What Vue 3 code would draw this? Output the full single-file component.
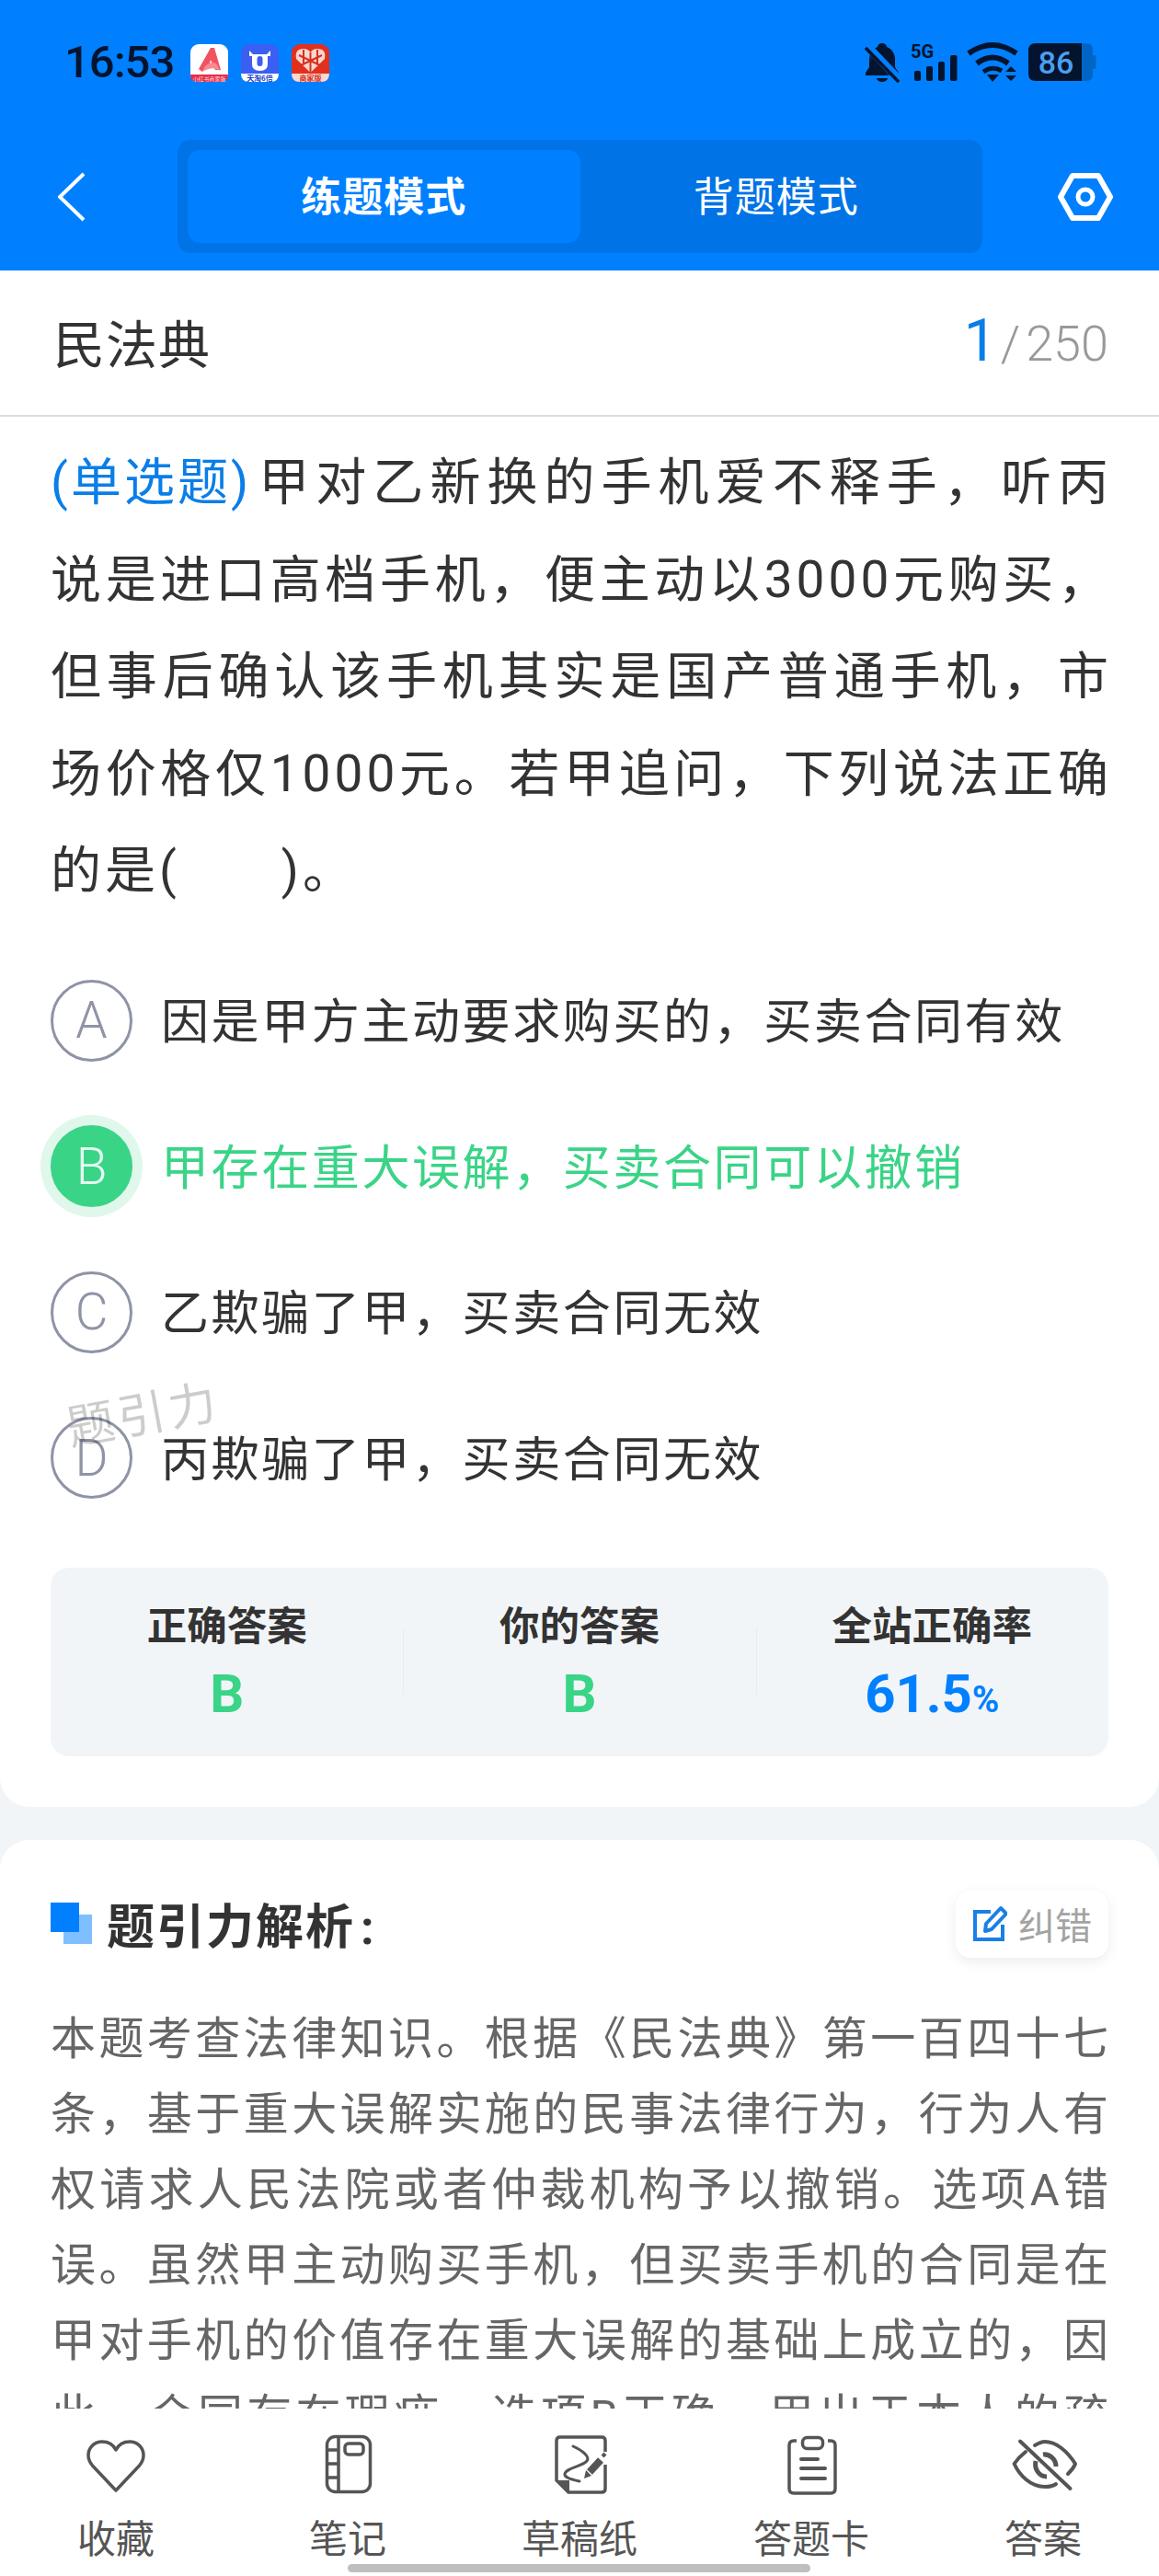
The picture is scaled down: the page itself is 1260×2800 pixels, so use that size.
<script setup>
const questionLines = [
  '甲对乙新换的手机爱不释手，听丙',
  '说是进口高档手机，便主动以3000元购买，',
  '但事后确认该手机其实是国产普通手机，市',
  '场价格仅1000元。若甲追问，下列说法正确',
]
const options = [
  { key: 'A', text: '因是甲方主动要求购买的，买卖合同有效' },
  { key: 'B', text: '甲存在重大误解，买卖合同可以撤销', correct: true },
  { key: 'C', text: '乙欺骗了甲，买卖合同无效' },
  { key: 'D', text: '丙欺骗了甲，买卖合同无效' },
]
const analysis = [
  '本题考查法律知识。根据《民法典》第一百四十七',
  '条，基于重大误解实施的民事法律行为，行为人有',
  '权请求人民法院或者仲裁机构予以撤销。选项A错',
  '误。虽然甲主动购买手机，但买卖手机的合同是在',
  '甲对手机的价值存在重大误解的基础上成立的，因',
  '此，合同存在瑕疵。选项B正确。甲出于本人的疏',
]
</script>

<template>
  <div class="page" lang="zh-CN">
    <header class="header">
      <div class="status">
        <span class="time">16:53</span>
        <div class="apps">
          <svg class="app" viewBox="0 0 41 41">
            <rect width="41" height="41" rx="9" fill="#fff" />
            <path d="M9 27 L22 4 L26 4 L33 28 L27 28 L22 17 L20 24 Q15 26 13 30 Z" fill="#f0535f" />
            <path d="M16 24 Q24 17 29 22 L32 29 Q25 23 13 30 Z" fill="#f78b92" />
            <path d="M0 33 H41 Q41 41 32 41 H9 Q0 41 0 33 Z" fill="#ea2b46" />
            <text x="20.5" y="39.5" class="tiny six" fill="#ffd9de">小红书商家版</text>
          </svg>
          <svg class="app" viewBox="0 0 41 41">
            <rect width="41" height="41" rx="9" fill="#3a5ff2" />
            <path d="M0 32 H41 Q41 41 32 41 H9 Q0 41 0 32 Z" fill="#fff" />
            <path d="M9 7 L13 11 H28 L32 7 L32 13 H29 V22 Q29 29 20.5 29 Q12 29 12 22 V13 H9 Z" fill="#fff" />
            <rect x="17.5" y="13" width="6" height="11" rx="3" fill="#3a5ff2" />
            <text x="20.5" y="39.5" class="tiny" fill="#1c3fc4">天淘6倍</text>
          </svg>
          <svg class="app" viewBox="0 0 41 41">
            <rect width="41" height="41" rx="9" fill="#e1301e" />
            <path d="M20.5 31 L5 16 Q3 5 13 5 Q18 5 20.5 9 Q23 5 28 5 Q38 5 36 16 Z" fill="#f8d7cf" />
            <path d="M20.5 9 V31 M8 12 L33 24 M33 12 L8 24 M13 6 L13 22 M28 6 L28 22" stroke="#d9301e" stroke-width="2" />
            <path d="M0 32 H41 Q41 41 32 41 H9 Q0 41 0 32 Z" fill="#fbd9d1" />
            <text x="20.5" y="39.5" class="tiny" fill="#d0301e">商家版</text>
          </svg>
        </div>
        <svg class="sys" viewBox="0 0 270 56">
          <path d="M28 7 c-3 0 -5 2 -5 4 c-6 2 -9 8 -9 14 v8 l-4 6 v3 h36 v-3 l-4 -6 v-8 c0 -6 -3 -12 -9 -14 c0 -2 -2 -4 -5 -4 z M22 45 a6 4 0 0 0 12 0 z" fill="#04142e" />
          <line x1="10" y1="8" x2="46" y2="46" stroke="#0080ff" stroke-width="9" />
          <line x1="10" y1="12" x2="46" y2="49" stroke="#04142e" stroke-width="3.5" />
          <text x="59" y="23" class="fiveg" fill="#04142e">5G</text>
          <g fill="#04142e">
            <rect x="63" y="37" width="7" height="11" rx="2" />
            <rect x="76" y="32" width="7" height="16" rx="2" />
            <rect x="89" y="27" width="7" height="21" rx="2" />
            <rect x="102" y="20" width="7.5" height="28" rx="2" />
            <path d="M142 41 L155 41 L148 49 Z" />
            <path d="M162 38 L168 32 L174 38 Z M162 42 L174 42 L168 48 Z" />
          </g>
          <g fill="none" stroke="#04142e" stroke-width="6">
            <path d="M122 18 Q148 0 174 18" />
            <path d="M131 29 Q148 16 165 29" />
            <path d="M138 38 Q148 31 158 37" stroke-width="5" />
          </g>
          <path d="M245 7 H250 Q257 7 257 14 V41 Q257 48 250 48 H245 Z" fill="#0065c5" />
          <rect x="257" y="20" width="3.5" height="15" rx="1.5" fill="#0065c5" />
          <path d="M195 7 H245 V48 H195 Q187 48 187 40 V15 Q187 7 195 7 Z" fill="#04142e" />
          <text x="217" y="40" class="batt" fill="#4c9ef0">86</text>
        </svg>
      </div>
      <nav class="nav">
        <svg class="back" viewBox="0 0 30 54">
          <polyline points="28,2 2,27 28,52" fill="none" stroke="#fff" stroke-width="4" />
        </svg>
        <div class="seg">
          <div class="seg-item active"><span>练题模式</span></div>
          <div class="seg-item"><span>背题模式</span></div>
        </div>
        <svg class="hex" viewBox="0 0 60 54">
          <path d="M16 4 H44 L57 27 L44 50 H16 L3 27 Z" fill="none" stroke="#fff" stroke-width="6" stroke-linejoin="round" />
          <circle cx="30" cy="27" r="8" fill="none" stroke="#fff" stroke-width="5" />
        </svg>
      </nav>
    </header>

    <main class="main">
      <section class="card first">
        <div class="title-row">
          <span class="title">民法典</span>
          <span class="count"><b>1</b><i>/</i>250</span>
        </div>
        <div class="question">
          <div class="q-line"><span class="q-type">(单选题)</span>{{ questionLines[0] }}</div>
          <div v-for="line in questionLines.slice(1)" :key="line" class="q-line">{{ line }}</div>
          <div class="q-line last">的是(<span class="blank"></span>)。</div>
        </div>
        <div class="options">
          <div v-for="o in options" :key="o.key" class="option" :class="{ correct: o.correct }">
            <span class="badge">{{ o.key }}</span>
            <span class="opt-text">{{ o.text }}</span>
          </div>
        </div>
        <div class="stats">
          <div class="stat">
            <div class="stat-label">正确答案</div>
            <div class="stat-value green">B</div>
          </div>
          <div class="stat">
            <div class="stat-label">你的答案</div>
            <div class="stat-value green">B</div>
          </div>
          <div class="stat">
            <div class="stat-label">全站正确率</div>
            <div class="stat-value blue">61.5<small>%</small></div>
          </div>
        </div>
      </section>

      <section class="card second">
        <div class="an-head">
          <div class="an-title">
            <span class="mark"></span>
            <span>题引力解析<em>:</em></span>
          </div>
          <div class="fix">
            <svg class="fix-icon" viewBox="0 0 38 40">
              <path d="M20 7 H3 V37 H33 V21" fill="none" stroke="#1a7fe6" stroke-width="4" />
              <path d="M14 28 L15 20 L31 3 L37 9 L21 26 Z" fill="none" stroke="#1a7fe6" stroke-width="4" stroke-linejoin="round" />
            </svg>
            <span>纠错</span>
          </div>
        </div>
        <div class="an-text">
          <div v-for="line in analysis" :key="line" class="an-line">{{ line }}</div>
        </div>
      </section>
      <div class="watermark">题引力</div>
    </main>

    <footer class="tabbar">
      <div class="tab">
        <svg viewBox="0 0 72 66">
          <path d="M36 17 C33 11 27 8 21 8 C12 8 6 15 6 23 C6 28 8 31 10.5 34 L36 61 L61.5 34 C64 31 66 28 66 23 C66 15 60 8 51 8 C45 8 39 11 36 17 Z" class="ic" />
        </svg>
        <span>收藏</span>
      </div>
      <div class="tab">
        <svg viewBox="0 0 72 66">
          <rect x="13.5" y="2.5" width="47" height="60" rx="9" class="ic" />
          <path d="M26 2.5 V62.5 M13.5 17 H26 M13.5 32 H26 M13.5 47 H26" class="ic" />
          <rect x="33" y="10" width="20" height="12" rx="4" class="ic" />
        </svg>
        <span>笔记</span>
      </div>
      <div class="tab">
        <svg viewBox="0 0 72 66">
          <path d="M64 19 V7 Q64 3 60 3 H15 Q11 3 11 7 V50 L24 63 H60 Q64 63 64 59 V33" class="ic" />
          <path d="M11 50 H25 V63 Z" fill="#555" />
          <path d="M29 13 C38 17 48 24 44 29 C39 35 22 36 20 43 C19 47 28 49 36 51" class="ic thin" />
          <path d="M47 41 L59 28" stroke="#555" stroke-width="8" fill="none" />
          <path d="M41 48 L43 39 L49 45 Z" fill="#555" />
          <path d="M61 24 L64 21" stroke="#555" stroke-width="4" fill="none" />
        </svg>
        <span>草稿纸</span>
      </div>
      <div class="tab">
        <svg viewBox="0 0 72 66">
          <path d="M20 7 H17 Q12 7 12 12 V59 Q12 64 17 64 H57 Q62 64 62 59 V12 Q62 7 57 7 H54" class="ic" />
          <rect x="26.5" y="3.5" width="22" height="12" rx="5" class="ic" />
          <path d="M25 27 H43 M25 37 H51 M25 48 H51" class="ic round" />
        </svg>
        <span>答题卡</span>
      </div>
      <div class="tab">
        <svg viewBox="0 0 72 66" class="over">
          <path d="M27 12 C32 9 35 8 38 8 C50 8 62 18 71 32 C70 35 66 40 63 43" class="ic round" />
          <path d="M17 19 C12 23 8 27 4.6 32 C10 44 22 57 38 57 C43 57 47 56 50 54" class="ic round" />
          <path d="M36 22 C43 21 50 27 50 35" class="ic thick" />
          <path d="M28 29 C26 38 32 46 40 46" class="ic thick" />
          <path d="M11 7.5 L65.5 59" class="ic round" />
        </svg>
        <span>答案</span>
      </div>
      <div class="home"></div>
    </footer>
  </div>
</template>

<style scoped>
.page {
  position: relative;
  display: flex;
  flex-direction: column;
  width: 1260px;
  height: 2800px;
  overflow: hidden;
  background: #f2f5f8;
  color: #333;
  font-family: Roboto, "Noto Sans CJK SC", sans-serif;
}
.header {
  flex: none;
  height: 294px;
  background: #0080ff;
}
.status {
  display: flex;
  align-items: flex-start;
  height: 152px;
  padding: 40px 0 0 70px;
  box-sizing: border-box;
}
.time {
  width: 137px;
  font-size: 49px;
  font-weight: 500;
  line-height: 56px;
  letter-spacing: -1px;
  color: #04142e;
}
.apps {
  display: flex;
  gap: 14px;
  margin-top: 8px;
}
.app {
  width: 41px;
  height: 41px;
}
.tiny {
  font-size: 8px;
  font-weight: 700;
  text-anchor: middle;
  font-family: "Noto Sans CJK SC", sans-serif;
}
.tiny.six {
  font-size: 6px;
  font-weight: 400;
}
.sys {
  width: 270px;
  height: 56px;
  margin-left: 573px;
}
.fiveg {
  font-size: 20px;
  font-weight: 700;
  font-family: Roboto, sans-serif;
}
.batt {
  font-size: 34px;
  font-weight: 500;
  text-anchor: middle;
  font-family: Roboto, sans-serif;
}
.nav {
  display: flex;
  align-items: center;
  height: 123px;
}
.back {
  width: 30px;
  height: 54px;
  margin-left: 63px;
}
.seg {
  display: flex;
  width: 875px;
  height: 123px;
  margin-left: 100px;
  padding: 11px;
  box-sizing: border-box;
  background: #0073e6;
  border-radius: 14px;
}
.seg-item {
  flex: 1;
  display: flex;
  align-items: center;
  justify-content: center;
  padding-bottom: 5px;
  box-sizing: border-box;
  border-radius: 14px;
  font-size: 44px;
  letter-spacing: 1px;
  color: #fff;
}
.seg-item.active {
  background: #0080ff;
  font-weight: 700;
}
.hex {
  width: 60px;
  height: 54px;
  margin-left: 82px;
}
.main {
  position: relative;
  flex: 1;
  min-height: 0;
  overflow: hidden;
}
.card {
  background: #fff;
}
.first {
  padding-bottom: 55px;
  border-radius: 0 0 32px 32px;
}
.second {
  margin-top: 36px;
  padding: 55px 55px 0;
  border-radius: 32px 32px 0 0;
}
.title-row {
  display: flex;
  align-items: center;
  justify-content: space-between;
  height: 153px;
  padding: 0 55px 4px 58px;
  border-bottom: 2px solid #dddddd;
}
.title {
  font-size: 56px;
  letter-spacing: 1px;
}
.count {
  display: flex;
  align-items: baseline;
  font-size: 54px;
  font-weight: 300;
  color: #999;
}
.count b {
  font-size: 64px;
  font-weight: 400;
  color: #0a7ee8;
}
.count i {
  margin: 0 6px 0 4px;
  font-style: normal;
}
.question {
  padding: 19px 55px 0;
}
.q-line {
  height: 105.6px;
  line-height: 105.6px;
  font-size: 55px;
  letter-spacing: 4px;
  margin-right: -4px;
  text-align: justify;
  text-align-last: justify;
  white-space: nowrap;
}
.q-line.last {
  text-align-last: left;
}
.blank {
  display: inline-block;
  width: 110px;
}
.q-type {
  color: #0a7ee8;
  letter-spacing: 0;
  margin-right: 8px;
}
.options {
  margin-top: 30px;
  padding: 0 55px;
}
.option {
  display: flex;
  align-items: center;
  height: 158.5px;
}
.badge {
  flex: none;
  display: flex;
  align-items: center;
  justify-content: center;
  width: 89px;
  height: 89px;
  box-sizing: border-box;
  border: 3px solid #8f93a6;
  border-radius: 50%;
  font-size: 55px;
  font-weight: 300;
  color: #8f93a6;
}
.opt-text {
  margin-left: 31px;
  padding-bottom: 5px;
  font-size: 52px;
  letter-spacing: 2.6px;
  white-space: nowrap;
}
.option.correct .badge {
  background: #3ad487;
  border-color: #3ad487;
  box-shadow: 0 0 0 11px #e0f8eb;
  color: #e4faef;
}
.option.correct .opt-text {
  color: #3ad487;
}
.stats {
  display: flex;
  height: 205px;
  margin: 40px 55px 0;
  padding-top: 39px;
  box-sizing: border-box;
  background: #f2f5f8;
  border-radius: 20px;
}
.stat {
  position: relative;
  flex: 1;
  text-align: center;
}
.stat + .stat::before {
  content: "";
  position: absolute;
  left: 0;
  top: 26px;
  width: 1px;
  height: 73px;
  background: #e8ebef;
}
.stat-label {
  font-size: 43.5px;
  font-weight: 700;
  line-height: 52px;
  color: #333;
}
.stat-value {
  margin-top: 12px;
  font-size: 58px;
  font-weight: 700;
  line-height: 68px;
}
.stat-value small {
  font-size: 40px;
}
.green {
  color: #3ad487;
}
.blue {
  color: #0080ff;
}
.an-head {
  display: flex;
  align-items: center;
  justify-content: space-between;
  height: 73px;
}
.an-title {
  display: flex;
  align-items: center;
  padding-bottom: 2px;
  font-size: 52px;
  font-weight: 700;
  letter-spacing: 2px;
}
.an-title em {
  margin-left: 6px;
  font-style: normal;
}
.mark {
  position: relative;
  width: 45px;
  height: 45px;
  margin-right: 16px;
}
.mark::before,
.mark::after {
  content: "";
  position: absolute;
  width: 31px;
  height: 32px;
}
.mark::before {
  right: 0;
  bottom: 0;
  background: #80bfff;
}
.mark::after {
  left: 0;
  top: 0;
  background: #0080ff;
}
.fix {
  display: flex;
  align-items: center;
  justify-content: center;
  gap: 12px;
  width: 166px;
  height: 73px;
  border-radius: 16px;
  background: #fff;
  box-shadow: 0 4px 14px rgba(0, 0, 0, 0.08);
  font-size: 40px;
  color: #a3a3a3;
}
.fix-icon {
  width: 38px;
  height: 40px;
}
.an-text {
  margin-top: 48px;
}
.an-line {
  height: 82px;
  margin-right: -3px;
  line-height: 82px;
  font-size: 49px;
  letter-spacing: 3px;
  color: #666;
  text-align: justify;
  text-align-last: justify;
  white-space: nowrap;
}
.watermark {
  position: absolute;
  left: 72px;
  top: 1210px;
  font-size: 52px;
  letter-spacing: 4px;
  line-height: 70px;
  color: rgba(0, 0, 0, 0.2);
  transform: rotate(-10.4deg);
}
.tabbar {
  position: relative;
  flex: none;
  display: grid;
  grid-template-columns: repeat(5, 1fr);
  height: 182px;
  padding-top: 28px;
  box-sizing: border-box;
  background: #fff;
}
.tab {
  display: flex;
  flex-direction: column;
  align-items: center;
  font-size: 42px;
  line-height: 56px;
  color: #555;
}
.tab svg {
  width: 72px;
  height: 66px;
  margin-bottom: 21px;
}
.tab svg.over {
  overflow: visible;
}
.ic {
  fill: none;
  stroke: #555;
  stroke-width: 3.5;
  stroke-linejoin: round;
}
.ic.thin {
  stroke-width: 3;
  stroke-linecap: round;
}
.ic.round {
  stroke-width: 4;
  stroke-linecap: round;
}
.ic.thick {
  stroke-width: 5;
}
.home {
  position: absolute;
  left: 378px;
  bottom: 4px;
  width: 503px;
  height: 9px;
  border-radius: 5px;
  background: #bfbfbf;
}
</style>

<style>
body {
  margin: 0;
  background: #f2f5f8;
}
</style>
